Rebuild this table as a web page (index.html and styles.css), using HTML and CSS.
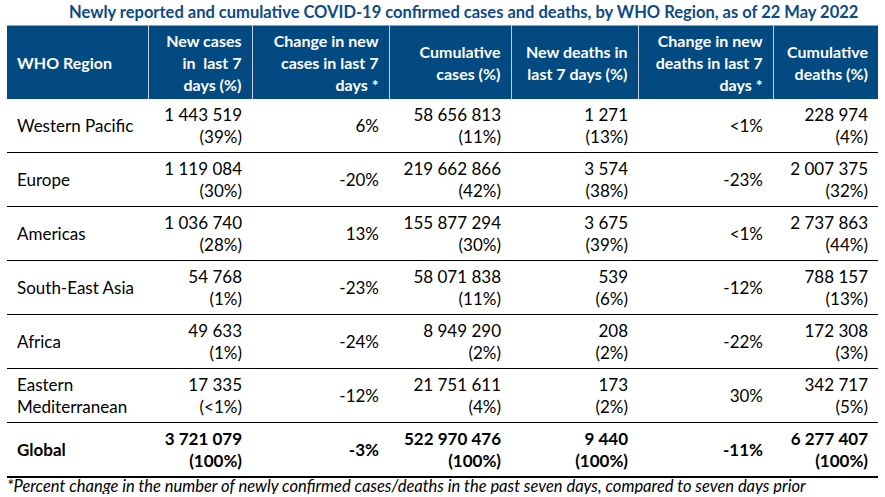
FILE: index.html
```html
<!DOCTYPE html>
<html lang="en">
<head>
<meta charset="utf-8">
<title>COVID-19 cases and deaths by WHO Region</title>
<link rel="stylesheet" href="styles.css">
</head>
<body>
<div class="page">
  <h1 class="title">Newly reported and cumulative COVID-19 confirmed cases and deaths, by WHO Region, as of 22 May 2022</h1>
  <table class="data">
    <colgroup>
      <col class="c1"><col class="c2"><col class="c3"><col class="c4"><col class="c5"><col class="c6"><col class="c7">
    </colgroup>
    <thead>
      <tr>
        <th class="left">WHO Region</th>
        <th>New cases<br>in&nbsp; last 7<br>days (%)</th>
        <th>Change in new<br>cases in last 7<br>days *</th>
        <th>Cumulative<br>cases (%)</th>
        <th>New deaths in<br>last 7 days (%)</th>
        <th>Change in new<br>deaths in last 7<br>days *</th>
        <th>Cumulative<br>deaths (%)</th>
      </tr>
    </thead>
    <tbody>
      <tr>
        <td class="left">Western Pacific</td>
        <td>1 443 519<br>(39%)</td>
        <td>6%</td>
        <td>58 656 813<br>(11%)</td>
        <td>1 271<br>(13%)</td>
        <td>&lt;1%</td>
        <td>228 974<br>(4%)</td>
      </tr>
      <tr>
        <td class="left">Europe</td>
        <td>1 119 084<br>(30%)</td>
        <td>-20%</td>
        <td>219 662 866<br>(42%)</td>
        <td>3 574<br>(38%)</td>
        <td>-23%</td>
        <td>2 007 375<br>(32%)</td>
      </tr>
      <tr>
        <td class="left">Americas</td>
        <td>1 036 740<br>(28%)</td>
        <td>13%</td>
        <td>155 877 294<br>(30%)</td>
        <td>3 675<br>(39%)</td>
        <td>&lt;1%</td>
        <td>2 737 863<br>(44%)</td>
      </tr>
      <tr>
        <td class="left">South-East Asia</td>
        <td>54 768<br>(1%)</td>
        <td>-23%</td>
        <td>58 071 838<br>(11%)</td>
        <td>539<br>(6%)</td>
        <td>-12%</td>
        <td>788 157<br>(13%)</td>
      </tr>
      <tr>
        <td class="left">Africa</td>
        <td>49 633<br>(1%)</td>
        <td>-24%</td>
        <td>8 949 290<br>(2%)</td>
        <td>208<br>(2%)</td>
        <td>-22%</td>
        <td>172 308<br>(3%)</td>
      </tr>
      <tr>
        <td class="left">Eastern<br>Mediterranean</td>
        <td>17 335<br>(&lt;1%)</td>
        <td>-12%</td>
        <td>21 751 611<br>(4%)</td>
        <td>173<br>(2%)</td>
        <td>30%</td>
        <td>342 717<br>(5%)</td>
      </tr>
      <tr class="total">
        <td class="left">Global</td>
        <td>3 721 079<br>(100%)</td>
        <td>-3%</td>
        <td>522 970 476<br>(100%)</td>
        <td>9 440<br>(100%)</td>
        <td>-11%</td>
        <td>6 277 407<br>(100%)</td>
      </tr>
    </tbody>
  </table>
  <p class="note">*Percent change in the number of newly confirmed cases/deaths in the past seven days, compared to seven days prior</p>
</div>
</body>
</html>
```

FILE: styles.css
```css
html, body {
  margin: 0;
  padding: 0;
  background: #ffffff;
}

.page {
  width: 885px;
  font-family: Lato, "Open Sans", sans-serif;
  color: #000000;
}

.title {
  margin: 0;
  height: 25px;
  padding-left: 69px;
  font-size: 16.5px;
  line-height: 24px;
  font-weight: 700;
  color: #0d4a86;
  white-space: nowrap;
}

.data {
  margin-left: 7px;
  width: 871px;
  table-layout: fixed;
  border-collapse: collapse;
  font-size: 17px;
}

.c1 { width: 141px; }
.c2 { width: 104px; }
.c3 { width: 137px; }
.c4 { width: 122px; }
.c5 { width: 127px; }
.c6 { width: 135px; }
.c7 { width: 105px; }

.data th,
.data td {
  padding: 0 10px;
  text-align: right;
  vertical-align: middle;
  line-height: 22px;
}

.data th {
  height: 73px;
  background: #024a81;
  color: #ffffff;
  font-size: 16px;
  font-weight: 700;
  border-top: 1px solid #a0a0a0;
  border-left: 1px solid #c3cfdb;
  border-right: 1px solid #c3cfdb;
  white-space: nowrap;
}

.data th:first-child { border-left: none; }
.data th:last-child { border-right: none; }

.data td {
  height: 53px;
  border-bottom: 1px solid #000000;
  white-space: nowrap;
}

.data .left {
  text-align: left;
}

.data .total td {
  font-weight: 700;
  border-bottom: 2px solid #000000;
}

.note {
  margin: 0 0 0 7px;
  font-size: 16.5px;
  line-height: 15px;
  padding-top: 1px;
  font-style: italic;
  white-space: nowrap;
}
```
